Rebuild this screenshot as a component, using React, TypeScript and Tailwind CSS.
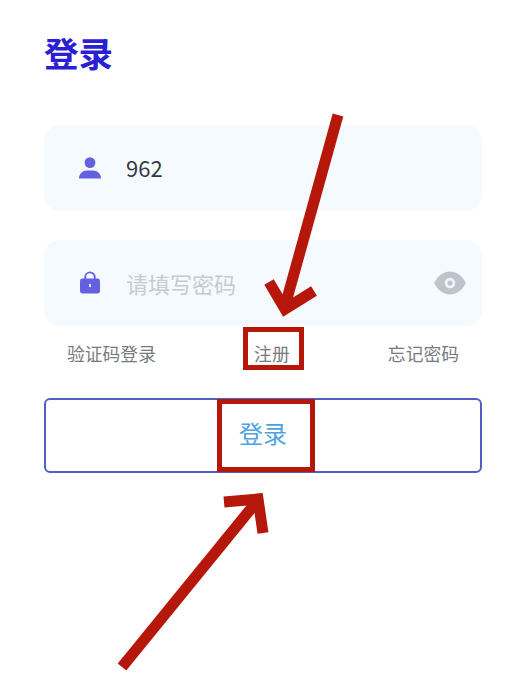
import React from "react";

const cjk = "font-['Noto_Sans_CJK_SC','Noto_Sans',sans-serif]";

function UserIcon() {
  return (
    <svg width="22" height="22" viewBox="0 0 22 22" className="shrink-0">
      <circle cx="11" cy="5.600" r="5.400" fill="#6461e0" />
      <path d="M0 21.500c0-4.600 3.600-8 8-8h6c4.400 0 8 3.400 8 8z" fill="#6461e0" />
    </svg>
  );
}

function LockIcon() {
  return (
    <svg width="22" height="23" viewBox="0 0 22 23" className="shrink-0 -translate-y-px">
      <path d="M6.200 8V6.200a4.800 4.800 0 0 1 9.600 0V8" fill="none" stroke="#6461e0" strokeWidth="1.900" />
      <rect x="1" y="7.400" width="20" height="15" rx="2.400" fill="#6461e0" />
      <rect x="10.200" y="12.800" width="1.600" height="3.400" rx="0.800" fill="#ffffff" />
    </svg>
  );
}

function EyeIcon() {
  return (
    <svg width="32" height="24" viewBox="0 0 32 24" className="shrink-0">
      <path d="M0 12C4 4.600 9.600 0.500 16 0.500S28 4.600 32 12c-4 7.400-9.600 11.500-16 11.500S4 19.400 0 12z" fill="#bfc4cc" />
      <circle cx="16" cy="12" r="5.200" fill="#f2f4f7" />
      <circle cx="16" cy="12" r="2.600" fill="#bfc4cc" />
    </svg>
  );
}

export default function App() {
  return (
    <div className={`relative h-[676px] w-[524px] overflow-hidden bg-white pl-[44px] pr-[42px] ${cjk}`}>
      <h1 className="pt-[26px] text-[34.500px] leading-[52px] font-bold text-[#2b1fd6]">登录</h1>

      <div className="mt-[47px] flex h-[86px] items-center rounded-[16px] bg-[#f5faff] pl-[35px] pr-[16px]">
        <UserIcon />
        <span className="ml-[25px] -translate-y-px text-[22px] text-[#333a45]">962</span>
      </div>

      <div className="mt-[29px] flex h-[86px] items-center rounded-[16px] bg-[#f5faff] pl-[35px] pr-[16px]">
        <LockIcon />
        <span className="ml-[25px] flex-1 text-[22px] text-[#c6cad1]">请填写密码</span>
        <EyeIcon />
      </div>

      <div className="mt-[11px] flex h-[32px] items-center justify-between pl-[23px] pr-[23px] text-[17.800px] leading-[32px] text-[#77797e]">
        <span>验证码登录</span>
        <span>注册</span>
        <span>忘记密码</span>
      </div>

      <button className="mt-[29px] flex h-[75px] w-full items-center justify-center rounded-[6px] border-2 border-[#4f5fc4] bg-white pb-[5px] text-[24px] text-[#4ea2e0]">
        登录
      </button>

      {/* annotations drawn on top of the screenshot */}
      <div className="absolute left-[243px] top-[327px] h-[43px] w-[61px] border-[5px] border-[#b5170b]" />
      <div className="absolute left-[217px] top-[399px] h-[73px] w-[98px] border-[5px] border-[#b5170b]" />
      <svg className="absolute left-0 top-0" width="524" height="676" viewBox="0 0 524 676" fill="none">
        <g stroke="#b5170b" strokeWidth="11">
          <path d="M338 115L285 306" />
          <path d="M269 282L285 309L314 291" />
          <path d="M122 667L258 500" />
          <path d="M224 502L258 499L263 533" />
        </g>
      </svg>
    </div>
  );
}
